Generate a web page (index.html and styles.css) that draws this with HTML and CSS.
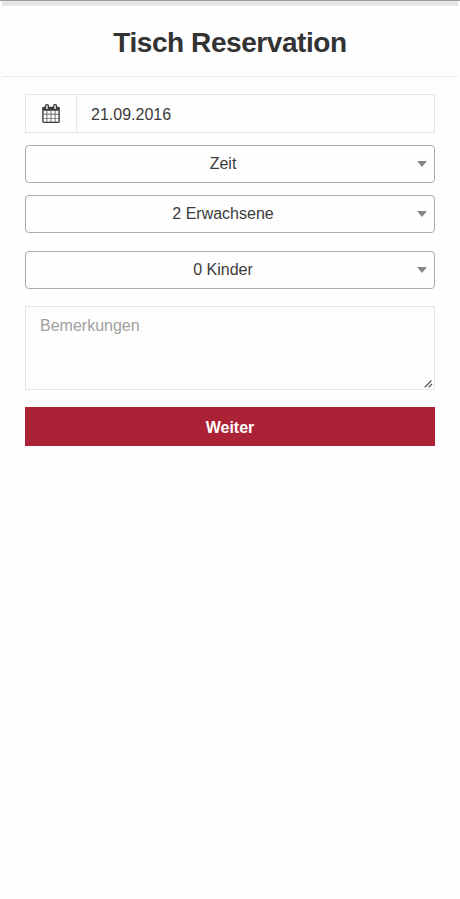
FILE: index.html
```html
<!DOCTYPE html>
<html lang="de">
<head>
<meta charset="utf-8">
<title>Tisch Reservation</title>
<link rel="stylesheet" href="styles.css">
</head>
<body>
<div class="topbar"></div>
<header class="header"><h1 class="title">Tisch Reservation</h1></header>
<main class="form">
  <div class="date">
    <span class="addon">
      <svg class="calendar" width="18" height="19" viewBox="0 0 1664 1792"><path fill="currentColor" d="M128 1664h288v-288h-288v288zM480 1664h320v-288h-320v288zM128 1312h288v-320h-288v320zM480 1312h320v-320h-320v320zM128 928h288v-288h-288v288zM864 1664h320v-288h-320v288zM480 928h320v-288h-320v288zM1248 1664h288v-288h-288v288zM864 1312h320v-320h-320v320zM512 448v-288q0-13-9.500-22.500t-22.500-9.500h-64q-13 0-22.500 9.500t-9.500 22.500v288q0 13 9.500 22.500t22.500 9.500h64q13 0 22.500-9.500t9.500-22.500zM1248 1312h288v-320h-288v320zM864 928h320v-288h-320v288zM1248 928h288v-288h-288v288zM1280 448v-288q0-13-9.500-22.500t-22.500-9.500h-64q-13 0-22.500 9.500t-9.500 22.500v288q0 13 9.500 22.500t22.500 9.500h64q13 0 22.500-9.500t9.500-22.500zM1664 384v1280q0 52-38 90t-90 38h-1408q-52 0-90-38t-38-90v-1280q0-52 38-90t90-38h128v-96q0-66 47-113t113-47h64q66 0 113 47t47 113v96h384v-96q0-66 47-113t113-47h64q66 0 113 47t47 113v96h128q52 0 90 38t38 90z"/></svg>
    </span>
    <span class="value">21.09.2016</span>
  </div>
  <div class="select"><span>Zeit</span><i class="caret"></i></div>
  <div class="select"><span>2 Erwachsene</span><i class="caret"></i></div>
  <div class="select spaced"><span>0 Kinder</span><i class="caret"></i></div>
  <div class="notes">Bemerkungen
    <svg class="grip" width="9" height="9" viewBox="0 0 9 9"><path d="M.8 8.200 7.500 1.500M4.800 8.200 8 5" fill="none" stroke="#555" stroke-width="1.300"/></svg>
  </div>
  <button class="submit">Weiter</button>
</main>
</body>
</html>
```
FILE: styles.css
```css
* { box-sizing: border-box; }
body {
  margin: 0;
  min-height: 899px;
  background: #fefefe;
  color: #3b3b3b;
  font: 16px/20px "Liberation Sans", Arial, sans-serif;
}
.topbar {
  height: 6px;
  border-top: 1px solid #9c9b9f;
  background: linear-gradient(#e6e6e9, #e6e6e9) 2px 0 / calc(100% - 4px) 100% no-repeat;
}
.header {
  height: 71px;
  margin: 0 2px;
  border-bottom: 1px solid #ebebed;
  display: flex;
  align-items: center;
  justify-content: center;
}
.title {
  margin: 3px 0 0;
  color: #333;
  font-size: 28px;
  line-height: 32px;
  font-weight: bold;
  letter-spacing: -0.43px;
}
.form {
  padding: 17px 25px 0;
  display: flex;
  flex-direction: column;
}
.date {
  height: 39px;
  margin-bottom: 12px;
  border: 1px solid #e5e5e5;
  display: flex;
}
.addon {
  width: 51px;
  border-right: 1px solid #e5e5e5;
  display: flex;
  align-items: center;
  justify-content: center;
}
.calendar { display: block; }
.value { padding: 10px 14px 9px; }
.select {
  position: relative;
  height: 38px;
  margin-bottom: 12px;
  padding: 0 28px 0 14px;
  border: 1px solid #aaa;
  border-radius: 4px;
  display: flex;
  align-items: center;
  justify-content: center;
}
.spaced { margin-top: 6px; margin-bottom: 17px; }
.caret {
  position: absolute;
  right: 7px;
  top: 15px;
  border: 5px solid transparent;
  border-top: 6px solid #888;
  border-bottom: 0;
}
.notes {
  position: relative;
  height: 84px;
  margin-bottom: 17px;
  padding: 9px 14px;
  border: 1px solid #e5e5e5;
  color: #a0a0a0;
}
.grip {
  position: absolute;
  right: 1px;
  bottom: 1px;
}
.submit {
  height: 39px;
  padding: 2px 0 0;
  border: 0;
  background: #ab2236;
  color: #fff;
  font: bold 16px/20px "Liberation Sans", Arial, sans-serif;
}
```
